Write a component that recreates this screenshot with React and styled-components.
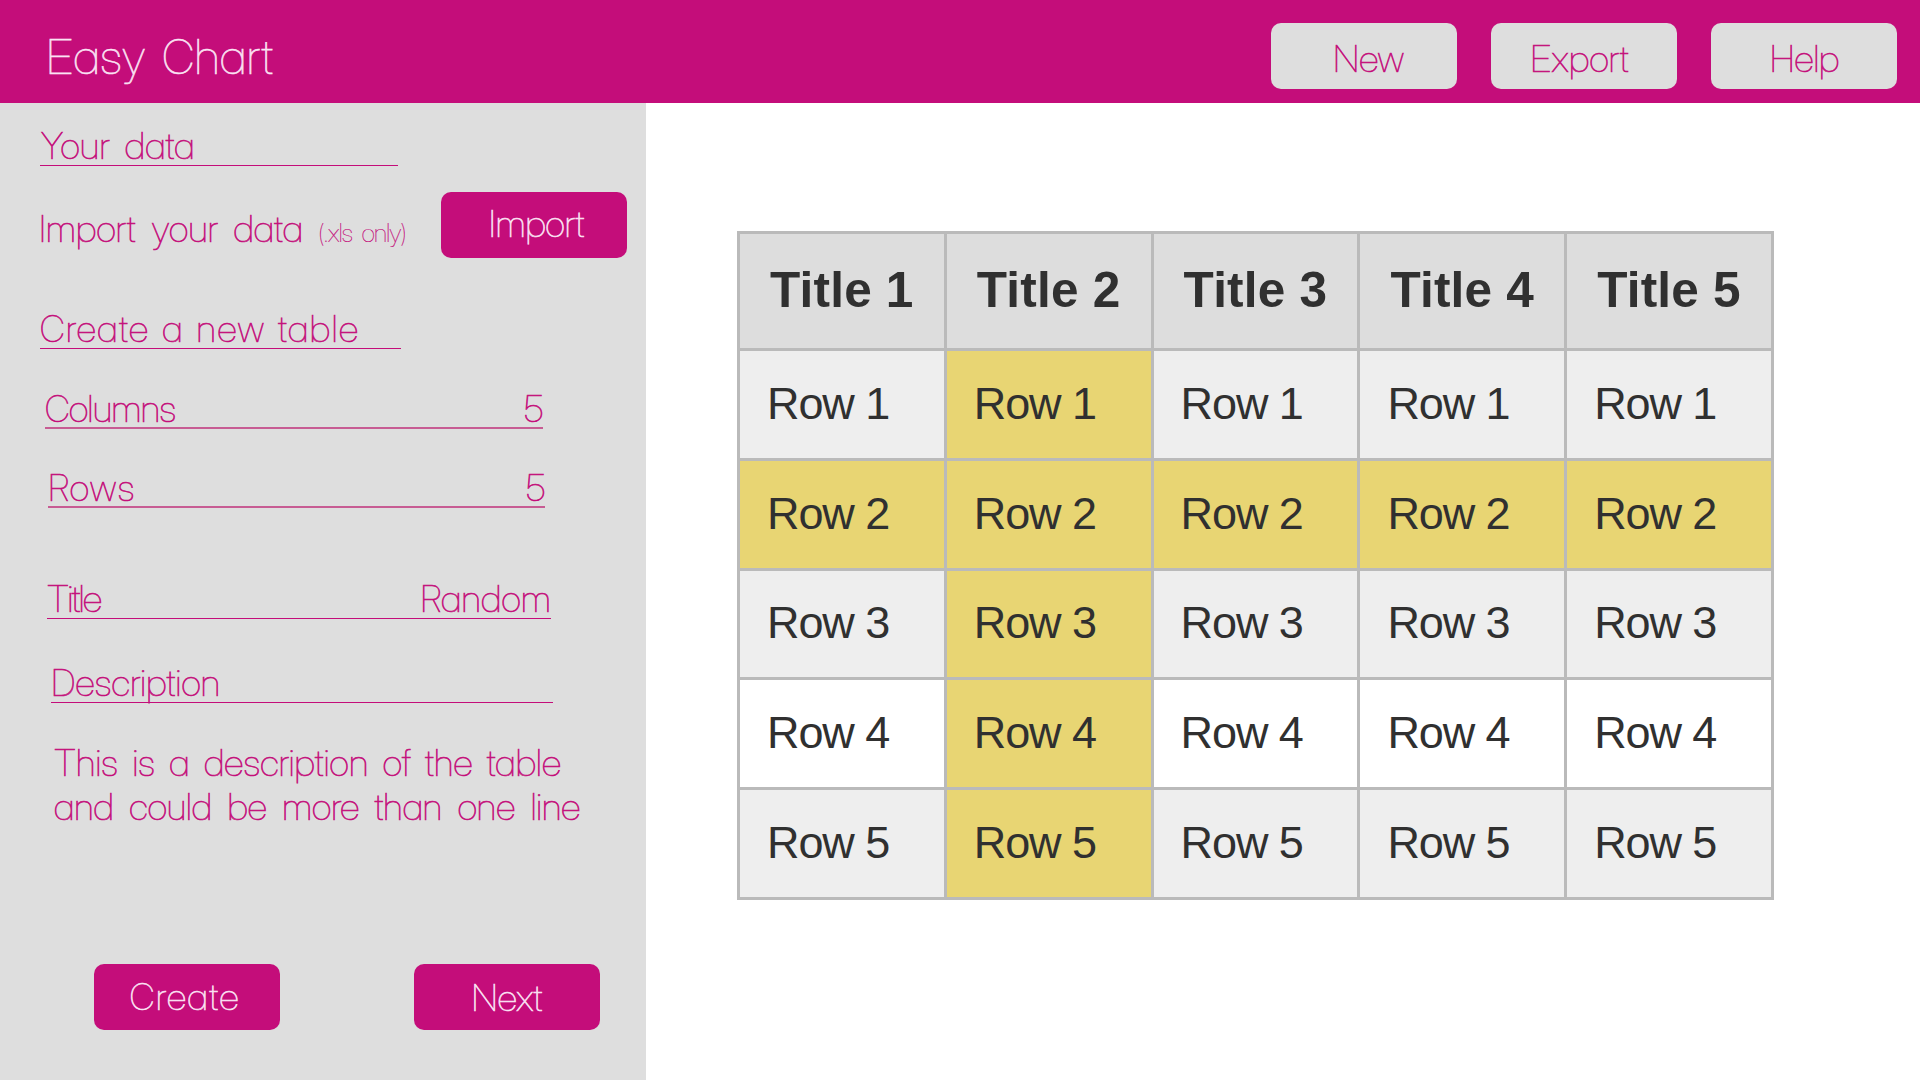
import React from "react";
import styled, { createGlobalStyle } from "styled-components";

const pink = "#c40d7a";
const grey = "#dedede";
const pale = "#fbe3f4";

const GlobalStyle = createGlobalStyle`
  * { box-sizing: border-box; }
  body { margin: 0; background: #fff; overflow: hidden; }
`;

const Page = styled.div`
  width: 1920px;
  height: 1080px;
  display: flex;
  flex-direction: column;
  color: ${pink};
  font-family: "Inter Display", Inter, sans-serif;
  font-weight: 100;
  font-feature-settings: "cv11" 1;
`;

const Text = styled.span`
  font-size: ${p => p.$size || 37}px;
  line-height: 45px;
  letter-spacing: ${p => p.$ls || 0}px;
  word-spacing: ${p => p.$ws ?? 8}px;
  white-space: nowrap;
  -webkit-text-stroke: ${p => (p.$size < 30 ? 0.2 : 0.6)}px currentColor;
`;

const Header = styled.header`
  flex: none;
  height: 103px;
  padding: 9px 23px 0 46px;
  display: flex;
  align-items: center;
  justify-content: space-between;
  background: ${pink};
`;

const Brand = styled(Text).attrs({ as: "h1" })`
  margin: 0;
  font-weight: 100;
  color: ${pale};
`;

const Actions = styled.nav`
  display: flex;
  gap: 34px;
`;

const Button = styled.button`
  flex: none;
  width: 186px;
  height: 66px;
  padding: 0;
  border: 0;
  border-radius: 10px;
  display: flex;
  align-items: center;
  justify-content: center;
  font: inherit;
  font-feature-settings: inherit;
  color: ${p => (p.$light ? pink : pale)};
  background: ${p => (p.$light ? grey : pink)};
`;

const Label = styled(Text)`
  margin: ${p => (p.$dy || 0) * 2}px 0 0 ${p => (p.$dx || 0) * 2}px;
`;

const Body = styled.div`
  flex: 1;
  display: flex;
`;

const Panel = styled.aside`
  width: 646px;
  padding-top: 20px;
  display: flex;
  flex-direction: column;
  background: ${grey};
`;

const Field = styled.div`
  flex: none;
  margin: ${p => p.$top}px 0 0 ${p => p.$left}px;
  padding: ${p => (p.$soft ? 1 : 0)}px 0 0 ${p => p.$inset || 0}px;
  width: ${p => p.$width}px;
  height: ${p => (p.$soft ? 44 : 43)}px;
  display: flex;
  justify-content: space-between;
  border-bottom: ${p => (p.$soft ? "2px solid #c75c93" : `1px solid ${pink}`)};
`;

const ImportRow = styled.div`
  height: 66px;
  margin: 26px 19px 0 39px;
  display: flex;
  align-items: center;
  justify-content: space-between;
`;

const ImportLabel = styled.div`
  display: flex;
  align-items: baseline;
  gap: 15px;
  margin-top: 12px;
`;

const Description = styled.p`
  margin: 38px 0 0 54px;
  height: 88px;
  display: flex;
  flex-direction: column;
  ${Text} { line-height: 44px; }
`;

const Footer = styled.div`
  margin: 135px 46px 0 94px;
  display: flex;
  justify-content: space-between;
`;

const Preview = styled.main`
  flex: 1;
  padding: 128px 0 0 91px;
`;

const Table = styled.div`
  width: 1037px;
  height: 669px;
  padding: 3px;
  display: grid;
  grid-template-columns: repeat(5, 1fr);
  grid-template-rows: 114px repeat(5, 1fr);
  gap: 3px;
  background: #bababa;
  font-family: "Liberation Sans", Arial, sans-serif;
  font-feature-settings: normal;
  font-weight: 400;
  color: #303030;
`;

const Cell = styled.div`
  padding: 0 0 1px 27px;
  display: flex;
  align-items: center;
  font-size: 45px;
  letter-spacing: -1.1px;
  white-space: nowrap;
  background: ${p => p.$fill};
`;

const HeadCell = styled(Cell)`
  padding: 0 0 3px 30px;
  font-size: 49.5px;
  letter-spacing: 0.2px;
  font-weight: 700;
`;

const indexes = [1, 2, 3, 4, 5];

function fillOf(row, col) {
  if (row === 2 || col === 2) return "#e8d573";
  return row === 4 ? "#ffffff" : "#eeeeee";
}

export default function App() {
  return (
    <>
      <GlobalStyle />
      <Page>
        <Header>
          <Brand $size={48} $ls={0.6} $ws={5}>Easy Chart</Brand>
          <Actions>
            <Button $light><Label $dx={4.5} $dy={2}>New</Label></Button>
            <Button $light><Label $dx={-4.5} $dy={2} $ls={0.2}>Export</Label></Button>
            <Button $light><Label $dx={0.5} $dy={2}>Help</Label></Button>
          </Actions>
        </Header>
        <Body>
          <Panel>
            <Field $top={0} $left={40} $width={358} $inset={1}><Text $ls={0.3} $ws={7}>Your data</Text></Field>
            <ImportRow>
              <ImportLabel>
                <Text $ls={0.2} $ws={7.5}>Import your data</Text>
                <Text $size={25} $ws={5} $ls={-0.8}>(.xls only)</Text>
              </ImportLabel>
              <Button><Label $dx={2.5} $dy={-1.5}>Import</Label></Button>
            </ImportRow>
            <Field $top={48} $left={40} $width={361}><Text $ls={1.6} $ws={3}>Create a new table</Text></Field>
            <Field $top={36} $left={45} $width={498} $soft><Text $ls={-0.5}>Columns</Text><Text>5</Text></Field>
            <Field $top={35} $left={48} $width={497} $soft><Text $ls={1.5}>Rows</Text><Text>5</Text></Field>
            <Field $top={68} $left={47} $width={504}><Text $ls={-1.4}>Title</Text><Text $ls={0.3}>Random</Text></Field>
            <Field $top={41} $left={51} $width={502}><Text $ls={0.3}>Description</Text></Field>
            <Description>
              <Text $ws={6} $ls={0.2}>This is a description of the table</Text>
              <Text $ws={7.5}>and could be more than one line</Text>
            </Description>
            <Footer>
              <Button><Label $dx={-2} $dy={-1} $ls={1.8}>Create</Label></Button>
              <Button><Label>Next</Label></Button>
            </Footer>
          </Panel>
          <Preview>
            <Table>
              {indexes.map(c => <HeadCell key={c} $fill="#dddddd">Title {c}</HeadCell>)}
              {indexes.map(r => indexes.map(c => <Cell key={`${r}${c}`} $fill={fillOf(r, c)}>Row {r}</Cell>))}
            </Table>
          </Preview>
        </Body>
      </Page>
    </>
  );
}
